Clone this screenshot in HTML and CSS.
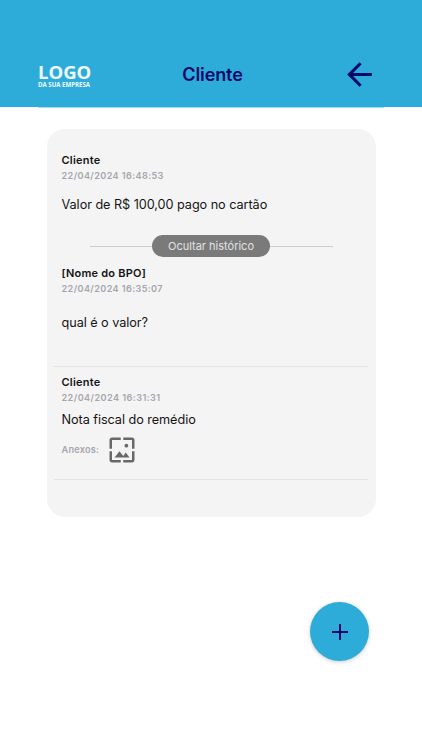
FILE: index.html
```html
<!DOCTYPE html>
<html lang="pt-BR">
<head>
<meta charset="utf-8">
<title>Cliente</title>
<link rel="stylesheet" href="styles.css">
</head>
<body>
<header class="header">
  <div class="bar">
    <div class="logo"><strong>LOGO</strong><span>DA SUA EMPRESA</span></div>
    <h1>Cliente</h1>
    <svg class="back" viewBox="0 0 24 24"><path d="M20 11H7.83l5.59-5.59L12 4l-8 8 8 8 1.41-1.41L7.83 13H20v-2z"/></svg>
  </div>
</header>
<main class="card">
  <article class="message latest">
    <h2>Cliente</h2>
    <time>22/04/2024 16:48:53</time>
    <p class="payment">Valor de R$ 100,00 pago no cartão</p>
  </article>
  <div class="history"><button>Ocultar histórico</button></div>
  <article class="message question">
    <h2>[Nome do BPO]</h2>
    <time>22/04/2024 16:35:07</time>
    <p class="ask">qual é o valor?</p>
  </article>
  <article class="message attached">
    <h2>Cliente</h2>
    <time class="spaced">22/04/2024 16:31:31</time>
    <p class="note">Nota fiscal do remédio</p>
    <div class="attachments">
      <span>Anexos:</span>
      <svg viewBox="0 0 24 24"><path d="M4 4h7V2H4c-1.1 0-2 .9-2 2v7h2V4zm6 9l-4 5h12l-3-4-2.03 2.71L10 13zm7-4.5c0-.83-.67-1.5-1.5-1.5S14 7.67 14 8.5s.67 1.5 1.5 1.5S17 9.33 17 8.5zM20 2h-7v2h7v7h2V4c0-1.1-.9-2-2-2zm0 18h-7v2h7c1.1 0 2-.9 2-2v-7h-2v7zM4 13H2v7c0 1.1.9 2 2 2h7v-2H4v-7z"/></svg>
    </div>
  </article>
</main>
<button class="add" aria-label="Adicionar"><svg viewBox="0 0 16 16"><path d="M8 0v16M0 8h16"/></svg></button>
</body>
</html>
```
FILE: styles.css
```css
* { box-sizing: border-box; }
body { margin: 0; height: 750px; background: #fff; color: #141414; font-family: Inter, "Liberation Sans", sans-serif; overflow: hidden; }
h1, h2, p { margin: 0; white-space: nowrap; }
button { border: 0; font-family: inherit; padding: 0; }
.header { height: 107px; background: #2eacd9; padding: 42px 38px 0; }
.bar { height: 66px; display: grid; grid-template-columns: 80px 1fr 80px; align-items: center; border-bottom: 1px solid #a2dbef; }
.logo { color: #effaff; font-family: "Open Sans", sans-serif; font-weight: 700; white-space: nowrap; }
.logo strong { display: block; font-size: 18.5px; line-height: 20px; font-weight: 700; letter-spacing: 0; }
.logo span { display: block; font-size: 6.1px; line-height: 5px; font-weight: 700; }
h1 { text-align: center; color: #05096b; font-size: 18px; line-height: 24px; font-weight: 600; letter-spacing: -0.1px; padding: 1px 0 0 3px; }
.back { width: 37px; height: 37px; fill: #05096b; justify-self: end; margin: -1px 6.4px 0 0; }
.card { width: 329px; height: 388px; margin: 22px 0 0 46.5px; padding: 0 8px 0 7px; border-radius: 18px; background: #f4f4f4; }
.message { padding-left: 8px; }
.latest { height: 105.5px; padding-top: 23px; }
h2 { font-size: 11px; line-height: 16px; font-weight: 600; letter-spacing: 0.22px; }
time { display: block; color: #a6a6ad; font-size: 9.1px; line-height: 15px; font-weight: 600; letter-spacing: 0.4px; white-space: nowrap; }
.spaced { letter-spacing: 0.45px; }
p { font-size: 12.7px; line-height: 18px; letter-spacing: -0.06px; }
.payment { margin-top: 13px; }
.history { height: 23px; margin: 0 35px 0 36px; display: flex; align-items: center; }
.history::before, .history::after { content: ""; flex: 1; height: 1px; background: #cecece; }
.history button { width: 118px; height: 22px; border-radius: 12px; background: #7a7a7a; color: #e2e2e2; font-size: 11px; line-height: 22px; letter-spacing: 0; }
.question { height: 109px; padding-top: 7px; border-bottom: 1px solid #e3e3e3; }
.ask { margin-top: 18.5px; }
.attached { height: 113.5px; padding-top: 7.5px; border-bottom: 1px solid #e3e3e3; }
.note { margin-top: 5.5px; }
.attachments { display: flex; align-items: center; gap: 8px; height: 30px; margin-top: 6px; color: #a6a6ad; font-size: 9.2px; font-weight: 600; letter-spacing: 0.2px; }
.attachments svg { width: 30px; height: 30px; fill: #686868; }
.add { display: flex; align-items: center; justify-content: center; width: 59px; height: 59px; margin: 85px 0 0 310px; border-radius: 50%; background: #2eacd9; box-shadow: 0 1px 4px #0003; }
.add svg { width: 16px; height: 16px; fill: none; stroke: #05096b; stroke-width: 2; }
```
